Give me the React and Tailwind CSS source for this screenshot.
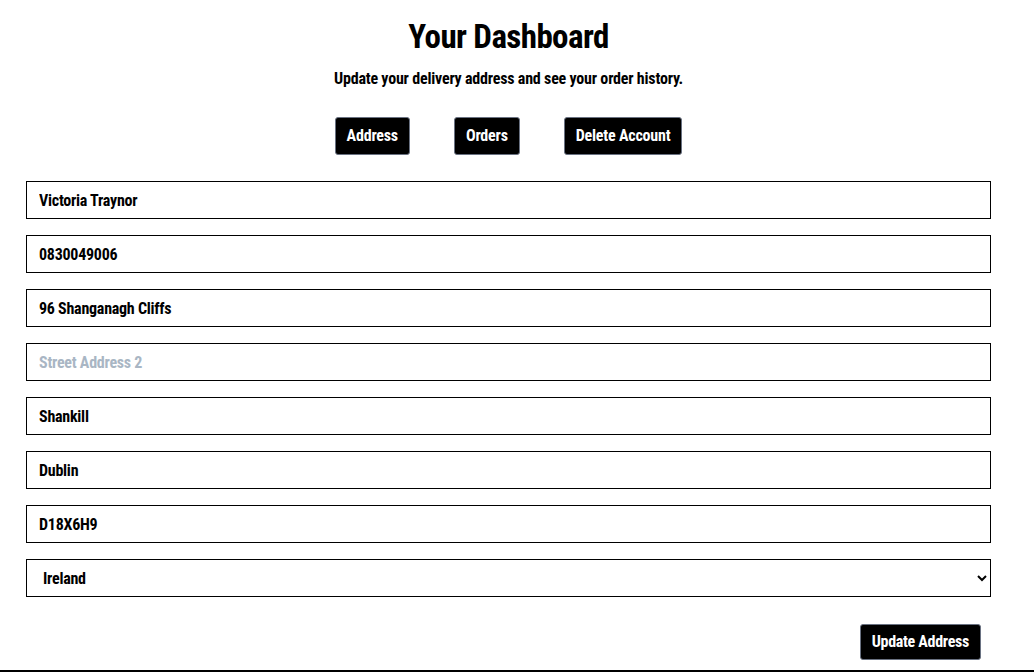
import { useState } from "react";

const font = { fontFamily: '"Roboto Condensed", "Liberation Sans", sans-serif' };

const fields = [
  { name: "name", value: "Victoria Traynor", placeholder: "Full Name" },
  { name: "phone", value: "0830049006", placeholder: "Phone Number" },
  { name: "street1", value: "96 Shanganagh Cliffs", placeholder: "Street Address 1" },
  { name: "street2", value: "", placeholder: "Street Address 2" },
  { name: "town", value: "Shankill", placeholder: "Town or City" },
  { name: "county", value: "Dublin", placeholder: "County" },
  { name: "postcode", value: "D18X6H9", placeholder: "Postcode" },
];

const tabBtn =
  "h-[38px] px-[11px] bg-black text-white text-[16px] font-bold tracking-[-0.2px] rounded-[3px] border border-gray-500";

export default function App() {
  const [form, setForm] = useState(
    Object.fromEntries(fields.map((f) => [f.name, f.value]))
  );
  const [country, setCountry] = useState("IE");

  const handleChange = (e) => setForm({ ...form, [e.target.name]: e.target.value });

  return (
    <div className="min-h-[672px] bg-white text-black flex flex-col" style={font}>
      <main className="flex-1 w-[965px] ml-[26px] flex flex-col items-center">
        <h1 className="mt-[17px] text-[33px] leading-[40px] font-bold tracking-[-0.6px]">Your Dashboard</h1>
        <p className="mt-[11px] text-[16px] leading-[22px] font-bold tracking-[-0.2px]">
          Update your delivery address and see your order history.
        </p>

        <div className="mt-[27px] flex gap-[44px]">
          <button type="button" className={tabBtn}>
            Address
          </button>
          <button type="button" className={tabBtn}>
            Orders
          </button>
          <button type="button" className={tabBtn}>
            Delete Account
          </button>
        </div>

        <form className="mt-[26px] w-full flex flex-col gap-[16px]" onSubmit={(e) => e.preventDefault()}>
          {fields.map((f) => (
            <input
              key={f.name}
              name={f.name}
              value={form[f.name]}
              onChange={handleChange}
              placeholder={f.placeholder}
              className="h-[38px] w-full px-[12px] border border-black text-[16px] font-bold tracking-[-0.25px] placeholder:text-[#a9b6c4] outline-none"
              style={font}
            />
          ))}
          <select
            value={country}
            onChange={(e) => setCountry(e.target.value)}
            className="h-[38px] w-full pl-[12px] pr-[10px] border border-black text-[16px] font-bold tracking-[-0.25px] bg-white"
            style={font}
          >
            <option value="IE">Ireland</option>
            <option value="GB">United Kingdom</option>
          </select>
          <div className="flex justify-end pr-[10px] mt-[11px]">
            <button type="submit" className="h-[36px] px-[11px] bg-black text-white text-[16px] font-bold tracking-[-0.3px] rounded-[3px] border border-gray-500">
              Update Address
            </button>
          </div>
        </form>
      </main>
      <footer className="border-t-2 border-black h-[2px]" />
    </div>
  );
}
